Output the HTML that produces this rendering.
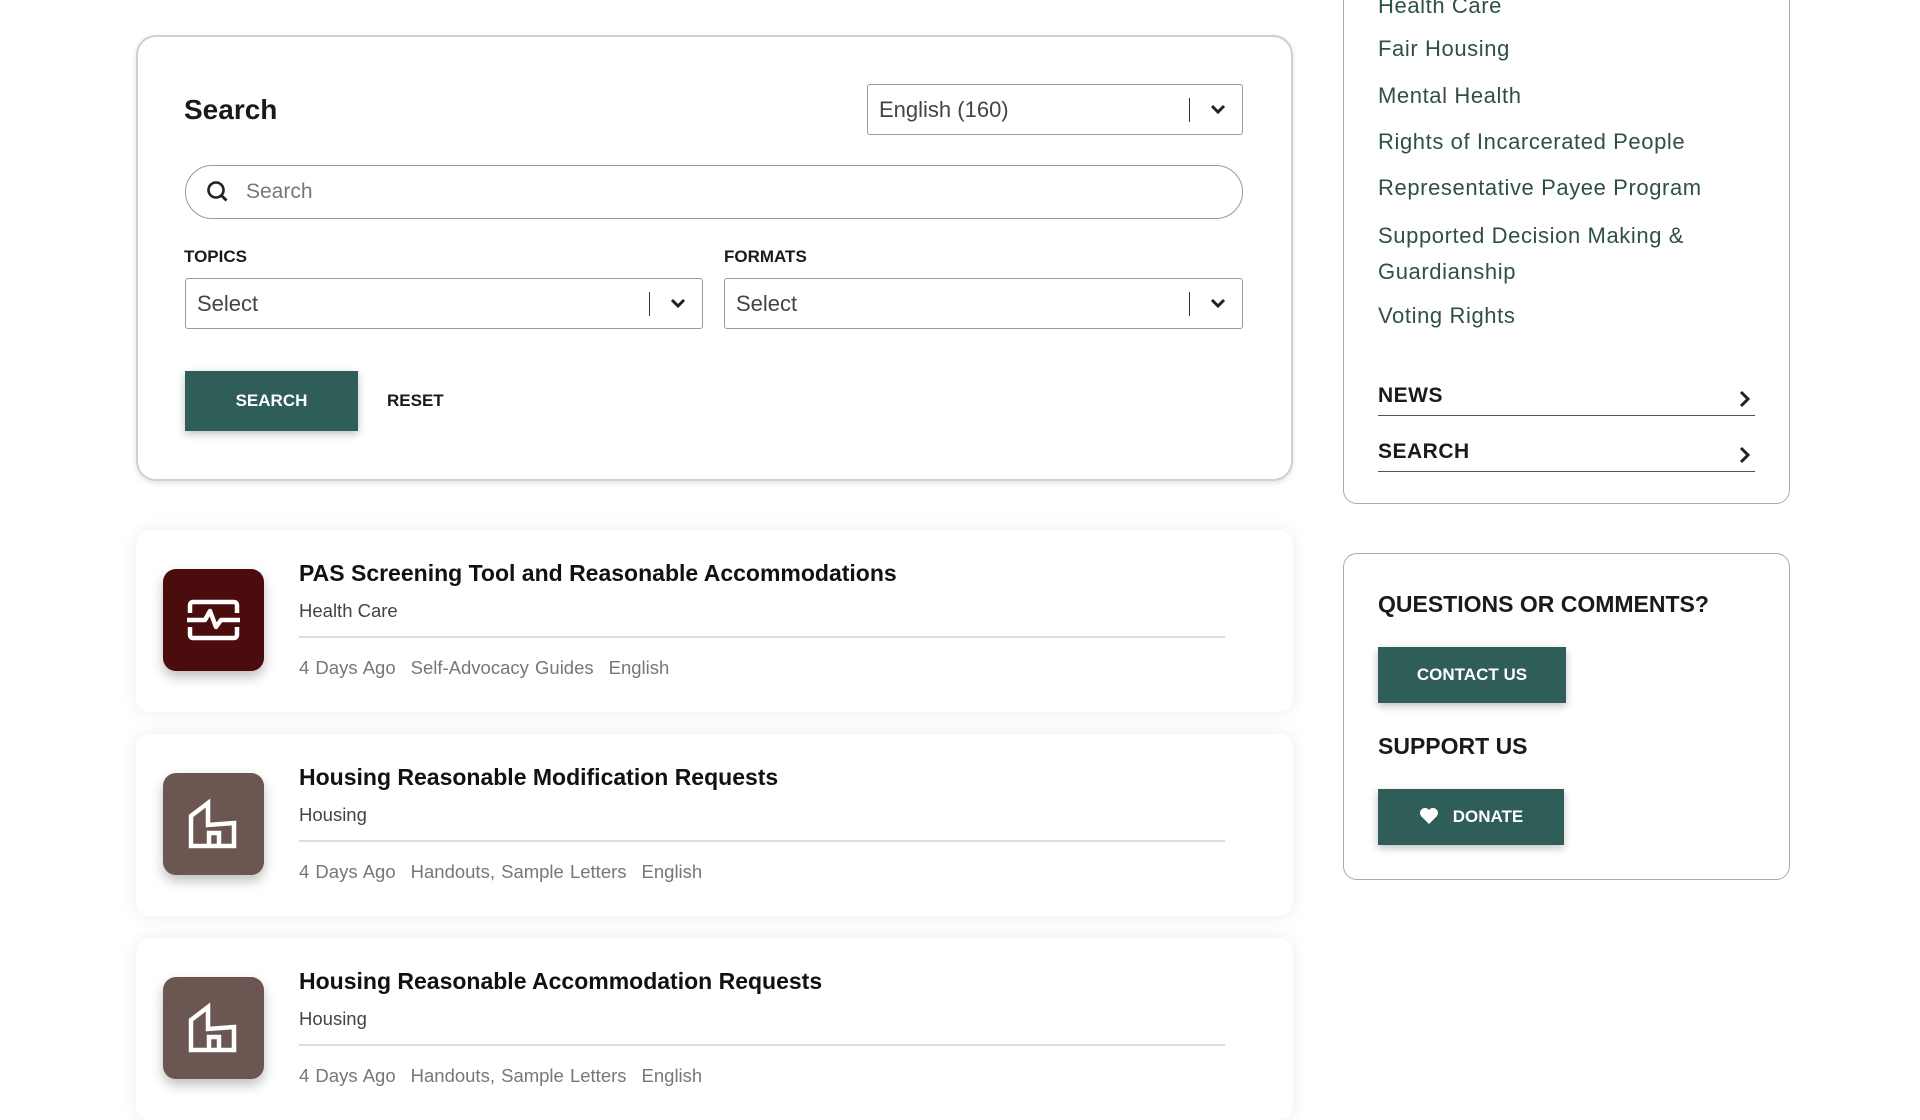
<!DOCTYPE html>
<html><head><meta charset="utf-8"><style>
*{box-sizing:border-box;margin:0;padding:0}
body{width:1920px;height:1080px;overflow:hidden;background:#fff;font-family:"Liberation Sans",Arial,sans-serif;position:relative;color:#1a1a1a}
.abs{position:absolute}
.h{font-family:"Liberation Sans",sans-serif;font-weight:bold}
.card{position:absolute;left:136px;width:1157px;background:#fff;border:2px solid #cfcfcf;border-radius:20px;box-shadow:0 2px 6px rgba(0,0,0,.12)}
.sel{position:absolute;border:1.5px solid #9a9a9a;border-radius:3px;height:51px;background:#fff;font-size:22px;color:#444;padding:12px 0 0 11px}
.sel .bar{position:absolute;right:52px;top:13px;width:1.5px;height:24px;background:#333}
.sel svg{position:absolute;right:16px;top:19px}
.lbl{position:absolute;font-size:17px;top:247px}
.btn{position:absolute;background:#2f5d58;color:#fff;font-size:17px;text-align:center;box-shadow:0 3px 8px rgba(0,0,0,.25)}
.res{position:absolute;left:136px;width:1157px;height:182px;background:#fff;border-radius:14px;box-shadow:0 0 18px rgba(0,0,0,.08)}
.ico{position:absolute;left:27px;top:39px;width:101px;height:102px;border-radius:13px;box-shadow:0 6px 12px rgba(0,0,0,.25)}
.res .t{position:absolute;left:163px;top:30px;font-size:23px;color:#111}
.res .s{position:absolute;left:163px;top:70px;font-size:18.5px;color:#444}
.res .d{position:absolute;left:163px;top:106px;width:926px;height:1.5px;background:#ddd}
.res .m{position:absolute;left:163px;top:127px;font-size:18.5px;color:#777;word-spacing:1px}
.res .m span{margin-right:15px}
.side{position:absolute;left:1343px;width:447px;border:1.5px solid #aaa;border-radius:14px;background:#fff}
.lk{position:absolute;left:1378px;font-size:22px;color:#2f4f4a;letter-spacing:.6px}
.nv{position:absolute;left:1378px;width:377px;border-bottom:1.5px solid #555;font-size:21px;height:32px;letter-spacing:.5px}
.nv svg{position:absolute;right:4px;top:6px}
</style></head><body>

<div class="card" style="top:35px;height:446px"></div>
<div class="abs h" style="left:184px;top:94px;font-size:28px">Search</div>
<div class="sel" style="left:867px;top:84px;width:376px">English (160)<div class="bar"></div><svg width="16" height="11" viewBox="0 0 16 11"><path d="M2 2l6 6 6-6" stroke="#222" stroke-width="3" fill="none"/></svg></div>
<div class="abs" style="left:185px;top:165px;width:1058px;height:54px;border:1.5px solid #999;border-radius:27px"></div>
<svg class="abs" style="left:206px;top:180px" width="24" height="24" viewBox="0 0 24 24"><circle cx="10" cy="10" r="7.5" stroke="#222" stroke-width="2.6" fill="none"/><path d="M15.5 15.5l5 5" stroke="#222" stroke-width="2.8"/></svg>
<div class="abs" style="left:246px;top:180px;font-size:21px;color:#777">Search</div>
<div class="lbl h" style="left:184px">TOPICS</div>
<div class="lbl h" style="left:724px">FORMATS</div>
<div class="sel" style="left:185px;top:278px;width:518px">Select<div class="bar"></div><svg width="16" height="11" viewBox="0 0 16 11"><path d="M2 2l6 6 6-6" stroke="#222" stroke-width="3" fill="none"/></svg></div>
<div class="sel" style="left:724px;top:278px;width:519px">Select<div class="bar"></div><svg width="16" height="11" viewBox="0 0 16 11"><path d="M2 2l6 6 6-6" stroke="#222" stroke-width="3" fill="none"/></svg></div>
<div class="btn h" style="left:185px;top:371px;width:173px;height:60px;line-height:60px">SEARCH</div>
<div class="abs h" style="left:387px;top:391px;font-size:17px">RESET</div>

<div class="res" style="top:530px">
<div class="ico" style="background:#4a0c0c"><svg width="101" height="102" viewBox="0 0 101 102"><path d="M27 44v-8a3 3 0 0 1 3-3h41a3 3 0 0 1 3 3v8M27 58v8a3 3 0 0 0 3 3h41a3 3 0 0 0 3-3v-8M24 51h18l5-9 6 16 5-7h19" stroke="#fff" stroke-width="4.5" fill="none" stroke-linejoin="round"/></svg></div>
<div class="t h">PAS Screening Tool and Reasonable Accommodations</div>
<div class="s">Health Care</div><div class="d"></div>
<div class="m"><span>4 Days Ago</span><span>Self-Advocacy Guides</span><span>English</span></div>
</div>
<div class="res" style="top:734px">
<div class="ico" style="background:#6b5651"><svg width="101" height="102" viewBox="0 0 101 102"><path d="M28 73V43l17-13v22l26-2v23zM46 73V60h10v13" stroke="#fff" stroke-width="4.5" fill="none"/></svg></div>
<div class="t h">Housing Reasonable Modification Requests</div>
<div class="s">Housing</div><div class="d"></div>
<div class="m"><span>4 Days Ago</span><span>Handouts, Sample Letters</span><span>English</span></div>
</div>
<div class="res" style="top:938px">
<div class="ico" style="background:#6b5651"><svg width="101" height="102" viewBox="0 0 101 102"><path d="M28 73V43l17-13v22l26-2v23zM46 73V60h10v13" stroke="#fff" stroke-width="4.5" fill="none"/></svg></div>
<div class="t h">Housing Reasonable Accommodation Requests</div>
<div class="s">Housing</div><div class="d"></div>
<div class="m"><span>4 Days Ago</span><span>Handouts, Sample Letters</span><span>English</span></div>
</div>

<div class="side" style="top:-20px;height:524px"></div>
<div class="lk" style="top:-7px">Health Care</div>
<div class="lk" style="top:36px">Fair Housing</div>
<div class="lk" style="top:83px">Mental Health</div>
<div class="lk" style="top:129px">Rights of Incarcerated People</div>
<div class="lk" style="top:175px">Representative Payee Program</div>
<div class="lk" style="top:218px;line-height:36px">Supported Decision Making &amp;<br>Guardianship</div>
<div class="lk" style="top:303px">Voting Rights</div>
<div class="nv h" style="top:384px">NEWS<svg width="12" height="18" viewBox="0 0 12 18"><path d="M2 2l7 7-7 7" stroke="#222" stroke-width="3" fill="none"/></svg></div>
<div class="nv h" style="top:440px">SEARCH<svg width="12" height="18" viewBox="0 0 12 18"><path d="M2 2l7 7-7 7" stroke="#222" stroke-width="3" fill="none"/></svg></div>

<div class="side" style="top:553px;height:327px"></div>
<div class="abs h" style="left:1378px;top:591px;font-size:23px">QUESTIONS OR COMMENTS?</div>
<div class="btn h" style="left:1378px;top:647px;width:188px;height:56px;line-height:56px;font-size:17px">CONTACT US</div>
<div class="abs h" style="left:1378px;top:733px;font-size:23px">SUPPORT US</div>
<div class="btn h" style="left:1378px;top:789px;width:186px;height:56px;line-height:56px;font-size:17px"><svg style="vertical-align:-3px;margin-right:14px" width="20" height="18" viewBox="0 0 20 18"><path d="M10 17L2 9a5 5 0 0 1 8-6 5 5 0 0 1 8 6z" fill="#fff"/></svg>DONATE</div>
</body></html>
